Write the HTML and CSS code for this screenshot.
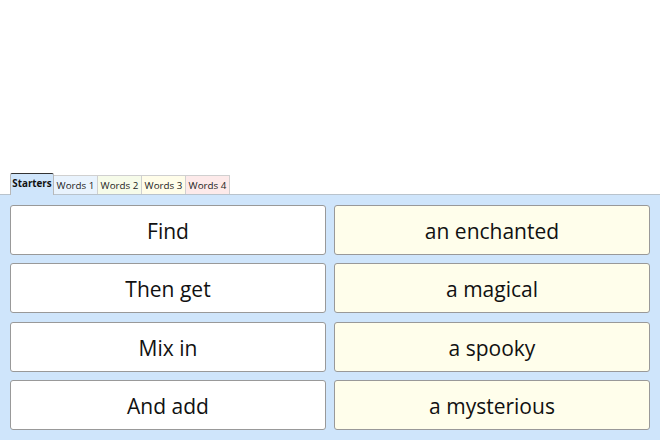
FILE: index.html
```html
<!DOCTYPE html>
<html>
<head>
<meta charset="utf-8">
<link rel="stylesheet" href="styles.css">
</head>
<body>
<div class="page">
  <div class="spacer"></div>
  <div class="tabs">
    <div class="tab active">Starters</div>
    <div class="tab t1">Words 1</div>
    <div class="tab t2">Words 2</div>
    <div class="tab t3">Words 3</div>
    <div class="tab t4">Words 4</div>
  </div>
  <div class="panel">
    <div class="grid">
      <div class="card">Find</div>
      <div class="card yellow">an enchanted</div>
      <div class="card">Then get</div>
      <div class="card yellow">a magical</div>
      <div class="card">Mix in</div>
      <div class="card yellow">a spooky</div>
      <div class="card">And add</div>
      <div class="card yellow">a mysterious</div>
    </div>
  </div>
</div>
</body>
</html>
```
FILE: styles.css
```css
html, body {
  margin: 0;
  padding: 0;
  background: #ffffff;
}
.page {
  width: 660px;
  height: 440px;
  display: flex;
  flex-direction: column;
  overflow: hidden;
}
.spacer {
  flex: 1;
}
.tabs {
  display: flex;
  align-items: flex-end;
  padding-left: 10px;
  position: relative;
  z-index: 2;
}
.tab {
  font-family: "Open Sans", "Liberation Sans", sans-serif;
  font-size: 9.8px;
  color: #222;
  height: 19px;
  line-height: 19px;
  width: 44px;
  box-sizing: border-box;
  text-align: center;
  border-top: 1px solid #d0d0d0;
  border-right: 1px solid #d0d0d0;
}
.tab.active {
  font-weight: bold;
  color: #111;
  background: #cfe5fb;
  height: 22px;
  line-height: 20px;
  border-top: 1px solid #333;
  border-left: 1px solid #b8b8b8;
  border-right: 1px solid #b8b8b8;
  border-radius: 2px 2px 0 0;
  margin-bottom: -1px;
}
.tab.t1 { background: #e9f3fd; }
.tab.t2 { background: #f6fbe9; }
.tab.t3 { background: #fffde9; }
.tab.t4 { background: #fdeaea; }
.panel {
  background: #cfe5fb;
  border-top: 1px solid #b9c3cc;
  padding: 10px 10px 10px 10px;
}
.grid {
  display: grid;
  grid-template-columns: 1fr 1fr;
  grid-auto-rows: 50px;
  column-gap: 8px;
  row-gap: 8.33px;
}
.card {
  background: #ffffff;
  border: 1px solid #999;
  border-radius: 3px;
  display: flex;
  align-items: center;
  justify-content: center;
  padding-top: 2px;
  font-family: "Open Sans", "Liberation Sans", sans-serif;
  font-size: 21px;
  color: #111;
  box-sizing: border-box;
}
.card.yellow {
  background: #fffeeb;
}
```
